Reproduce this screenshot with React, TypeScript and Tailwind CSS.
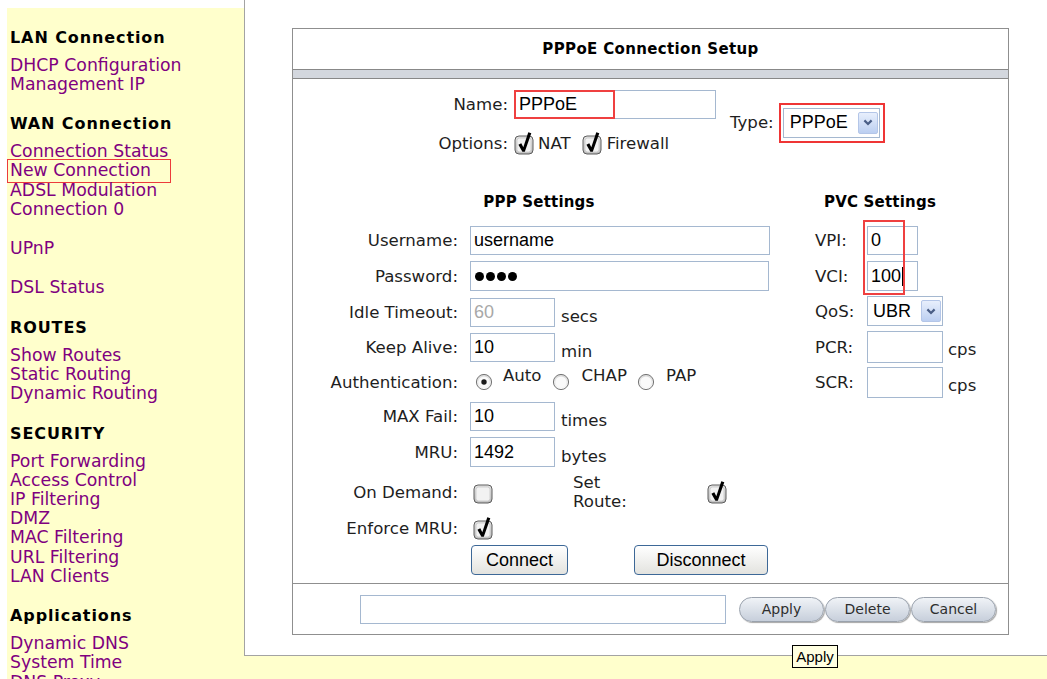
import React from "react";

const inputFont = "font-['Liberation_Sans',Arial,sans-serif]";

type NavGroup = { title?: string; links: string[] };

const nav: NavGroup[] = [
  { title: "LAN Connection", links: ["DHCP Configuration", "Management IP"] },
  {
    title: "WAN Connection",
    links: ["Connection Status", "New Connection", "ADSL Modulation", "Connection 0"],
  },
  { links: ["UPnP"] },
  { links: ["DSL Status"] },
  { title: "ROUTES", links: ["Show Routes", "Static Routing", "Dynamic Routing"] },
  {
    title: "SECURITY",
    links: [
      "Port Forwarding",
      "Access Control",
      "IP Filtering",
      "DMZ",
      "MAC Filtering",
      "URL Filtering",
      "LAN Clients",
    ],
  },
  { title: "Applications", links: ["Dynamic DNS", "System Time", "DNS Proxy"] },
];

function CheckBox({ checked }: { checked: boolean }) {
  return (
    <svg width="20" height="24" viewBox="0 0 20 24" className="block shrink-0">
      <defs>
        <linearGradient id="cbFill" x1="0" y1="0" x2="0" y2="1">
          <stop offset="0" stopColor="#e4e4e4" />
          <stop offset="1" stopColor="#b9b9b9" />
        </linearGradient>
      </defs>
      <rect x="1" y="5" width="18" height="18" rx="4" fill="url(#cbFill)" stroke="#5e5e5e" />
      <rect x="3" y="7" width="14" height="14" rx="2.5" fill="#f2f2f2" stroke="#cfcfcf" />
      {checked && (
        <path d="M4.4 13.8 L7.3 12.3 L9.3 16.2 L14.3 1.2 L17.3 2.2 L10.8 20.8 L8.4 20.8 Z" fill="#000" />
      )}
    </svg>
  );
}

function Radio({ on }: { on?: boolean }) {
  return (
    <svg width="18" height="18" viewBox="0 0 18 18" className="block shrink-0">
      <defs>
        <linearGradient id="rdFill" x1="0" y1="0" x2="0" y2="1">
          <stop offset="0" stopColor="#d6d6d6" />
          <stop offset="1" stopColor="#fbfbfb" />
        </linearGradient>
      </defs>
      <circle cx="9" cy="9" r="7.6" fill="url(#rdFill)" stroke="#767676" />
      <circle cx="9" cy="9" r="5.6" fill="#fafafa" />
      {on && <circle cx="9" cy="9" r="2.7" fill="#1c1c1c" />}
    </svg>
  );
}

function DropArrow() {
  return (
    <span className="flex h-[22px] w-[20px] items-center justify-center rounded-[2px] border border-[#b4c6e8] bg-linear-to-b from-[#e8effc] to-[#bccff1]">
      <svg width="10" height="7" viewBox="0 0 10 7">
        <path d="M1.4 1.4 L5 5 L8.6 1.4" fill="none" stroke="#4a5e86" strokeWidth="2.2" />
      </svg>
    </span>
  );
}

function Field({
  size,
  muted,
  children,
}: {
  size: string;
  muted?: boolean;
  children?: React.ReactNode;
}) {
  return (
    <div
      className={`flex shrink-0 items-center border border-[#a5b8d0] bg-white pl-[3px] text-[18px] ${
        muted ? "text-[#a8a8a8]" : "text-black"
      } ${inputFont} ${size}`}
    >
      {children}
    </div>
  );
}

function Select({ size, value }: { size: string; value: string }) {
  return (
    <div
      className={`flex shrink-0 items-center justify-between border border-[#a5b8d0] bg-white pr-[1px] text-[18px] text-black ${inputFont} ${size}`}
    >
      <span>{value}</span>
      <DropArrow />
    </div>
  );
}

function PppRow({
  label,
  className,
  children,
}: {
  label: string;
  className: string;
  children: React.ReactNode;
}) {
  return (
    <div className={`flex items-center ${className}`}>
      <span className="w-[165px] shrink-0 text-right">{label}</span>
      <div className="ml-[12px] flex h-full items-center">{children}</div>
    </div>
  );
}

function Unit({ children }: { children: React.ReactNode }) {
  return <span className="mb-[1px] ml-[6px] self-end leading-[19px]">{children}</span>;
}

function PvcRow({
  label,
  className,
  children,
}: {
  label: string;
  className: string;
  children: React.ReactNode;
}) {
  return (
    <div className={`flex items-center ${className}`}>
      <span className="w-[52px] shrink-0">{label}</span>
      <div className="flex h-full items-center">{children}</div>
    </div>
  );
}

function PillButton({ children }: { children: React.ReactNode }) {
  return (
    <div className="flex h-[25px] w-[85px] items-center justify-center rounded-full border border-[#9aa2ad] bg-linear-to-b from-[#f0f3f7] to-[#c7cfdb] text-[14px] text-[#2e2e2e] shadow-[1px_1px_1px_rgba(0,0,0,0.35)]">
      {children}
    </div>
  );
}

function PushButton({ width, children }: { width: string; children: React.ReactNode }) {
  return (
    <div
      className={`flex h-[30px] items-center justify-center rounded-[4px] border border-[#3d6897] bg-linear-to-b from-[#ffffff] to-[#e3e3df] text-[18px] text-black ${inputFont} ${width}`}
    >
      {children}
    </div>
  );
}

export default function App() {
  return (
    <div className="relative flex h-[679px] w-[1047px] overflow-hidden bg-white font-['DejaVu_Sans',Verdana,sans-serif] text-[16.6px] leading-[19px] text-[#1e1e1e]">
      {/* side menu */}
      <aside className="ml-[7px] mt-[8px] w-[237px] shrink-0 bg-[#ffffcc] pl-[3px] pt-[19.5px]">
        {nav.map((g, i) => (
          <div key={i} className={i === 0 ? "" : "mt-[20.2px]"}>
            {g.title && (
              <div className="mb-[8.8px] text-[16px] font-bold leading-[19.2px] tracking-[0.9px] text-black">
                {g.title}
              </div>
            )}
            {g.links.map((l) => (
              <div key={l} className="relative text-[17.3px] leading-[19.2px] text-[#800080]">
                {l}
                {l === "New Connection" && (
                  <span className="absolute left-[-3px] top-[-2px] h-[24px] w-[164px] border-[1.5px] border-[#ec3b3b]" />
                )}
              </div>
            ))}
          </div>
        ))}
      </aside>

      <div className="flex flex-1 flex-col">
        <main className="h-[656px] shrink-0 border-b border-l border-[#a3a3a3] bg-white pl-[47px] pt-[28px]">
          <div className="flex h-[607px] w-[717px] flex-col border border-[#8f8f8f]">
            <div className="flex h-[40px] items-center justify-center text-[15px] font-bold tracking-[0.35px] text-black">
              PPPoE Connection Setup
            </div>
            <div className="h-[10px] border-y border-[#888888] bg-[#d3d7de]" />

            {/* form body */}
            <div className="h-[504px] pt-[11px]">
              <div className="flex items-center pl-[127px]">
                <div className="flex flex-col">
                  <div className="flex h-[29px] items-center">
                    <span className="w-[88px] text-right">Name:</span>
                    <div className="relative ml-[6px]">
                      <Field size="w-[202px] h-[29px] pl-[4px]">PPPoE</Field>
                      <span className="absolute left-0 top-0 h-[29px] w-[101px] border-2 border-[#ef4040]" />
                    </div>
                  </div>
                  <div className="mt-[12px] flex h-[24px] items-center">
                    <span className="w-[88px] text-right">Options:</span>
                    <span className="ml-[6px]">
                      <CheckBox checked />
                    </span>
                    <span className="ml-[4px]">NAT</span>
                    <span className="ml-[11px]">
                      <CheckBox checked />
                    </span>
                    <span className="ml-[5px]">Firewall</span>
                  </div>
                </div>
                <span className="ml-[14px]">Type:</span>
                <div className="ml-[5px] border-2 border-[#ef3535] pb-[3px] pl-[2px] pr-[3px] pt-[3px]">
                  <Select size="w-[97px] h-[30px] pl-[6px]" value="PPPoE" />
                </div>
              </div>

              <div className="mt-[39px] flex text-[15px] font-bold leading-[17px] tracking-[0.2px] text-black">
                <div className="w-[492px] text-center">PPP Settings</div>
                <div className="w-[190px] text-center">PVC Settings</div>
              </div>

              <div className="mt-[15px] flex">
                {/* PPP settings */}
                <div className="w-[507px] shrink-0">
                  <PppRow label="Username:" className="h-[29px]">
                    <Field size="w-[300px] h-[29px]">username</Field>
                  </PppRow>
                  <PppRow label="Password:" className="mt-[6px] h-[30px]">
                    <Field size="w-[299px] h-[30px] pl-[4px] gap-[2px]">
                      <span className="h-[9px] w-[9px] rounded-full bg-black" />
                      <span className="h-[9px] w-[9px] rounded-full bg-black" />
                      <span className="h-[9px] w-[9px] rounded-full bg-black" />
                      <span className="h-[9px] w-[9px] rounded-full bg-black" />
                    </Field>
                  </PppRow>
                  <PppRow label="Idle Timeout:" className="mt-[7px] h-[29px]">
                    <Field size="w-[85px] h-[29px]" muted>
                      60
                    </Field>
                    <Unit>secs</Unit>
                  </PppRow>
                  <PppRow label="Keep Alive:" className="mt-[6px] h-[29px]">
                    <Field size="w-[85px] h-[29px]">10</Field>
                    <Unit>min</Unit>
                  </PppRow>
                  <PppRow label="Authentication:" className="mt-[5px] h-[30px]">
                    <span className="ml-[5px]">
                      <Radio on />
                    </span>
                    <span className="-mt-[1px] ml-[10px] self-start">Auto</span>
                    <span className="ml-[10px]">
                      <Radio />
                    </span>
                    <span className="-mt-[1px] ml-[12px] self-start">CHAP</span>
                    <span className="ml-[10px]">
                      <Radio />
                    </span>
                    <span className="-mt-[1px] ml-[11px] self-start">PAP</span>
                  </PppRow>
                  <PppRow label="MAX Fail:" className="mt-[5px] h-[29px]">
                    <Field size="w-[85px] h-[29px]">10</Field>
                    <Unit>times</Unit>
                  </PppRow>
                  <PppRow label="MRU:" className="mt-[6px] h-[30px]">
                    <Field size="w-[85px] h-[30px]">1492</Field>
                    <Unit>bytes</Unit>
                  </PppRow>
                  <PppRow label="On Demand:" className="mt-[6px] h-[38px]">
                    <span className="ml-[3px]">
                      <CheckBox checked={false} />
                    </span>
                    <span className="ml-[80px] w-[134px] leading-[19px]">
                      Set
                      <br />
                      Route:
                    </span>
                    <CheckBox checked />
                  </PppRow>
                  <PppRow label="Enforce MRU:" className="mt-[6px] h-[22px]">
                    <span className="ml-[3px]">
                      <CheckBox checked />
                    </span>
                  </PppRow>
                  <div className="mt-[6px] flex h-[30px] pl-[178px]">
                    <PushButton width="w-[97px]">Connect</PushButton>
                    <div className="ml-[66px]">
                      <PushButton width="w-[134px]">Disconnect</PushButton>
                    </div>
                  </div>
                </div>

                {/* PVC settings */}
                <div className="relative flex-1 pl-[15px]">
                  <PvcRow label="VPI:" className="h-[29px]">
                    <Field size="w-[51px] h-[29px]">0</Field>
                  </PvcRow>
                  <PvcRow label="VCI:" className="mt-[6px] h-[30px]">
                    <Field size="w-[51px] h-[30px]">
                      100
                      <span className="ml-[1px] h-[19px] w-[1px] bg-black" />
                    </Field>
                  </PvcRow>
                  <PvcRow label="QoS:" className="mt-[5px] h-[30px]">
                    <Select size="w-[76px] h-[30px] pl-[5px]" value="UBR" />
                  </PvcRow>
                  <PvcRow label="PCR:" className="mt-[5px] h-[32px]">
                    <Field size="w-[76px] h-[32px]" />
                    <span className="mb-[4px] ml-[5px] self-end">cps</span>
                  </PvcRow>
                  <PvcRow label="SCR:" className="mt-[4px] h-[31px]">
                    <Field size="w-[76px] h-[31px]" />
                    <span className="mb-[3px] ml-[5px] self-end">cps</span>
                  </PvcRow>
                  <span className="absolute left-[63px] top-[-6px] h-[75px] w-[42px] border-2 border-[#ef4040]" />
                </div>
              </div>
            </div>

            {/* footer */}
            <div className="flex h-[51px] items-center border-t border-[#8f8f8f] pl-[67px]">
              <Field size="w-[366px] h-[29px]" />
              <div className="ml-[13px] flex gap-[1px]">
                <PillButton>Apply</PillButton>
                <PillButton>Delete</PillButton>
                <PillButton>Cancel</PillButton>
              </div>
            </div>
          </div>
        </main>
        <div className="flex-1 bg-[#ffffcc]" />
      </div>

      {/* hover tip */}
      <div
        className={`absolute left-[792px] top-[645px] flex h-[23px] w-[46px] items-center justify-center border border-black bg-[#ffffe1] text-[15px] text-black ${inputFont}`}
      >
        Apply
      </div>
    </div>
  );
}
